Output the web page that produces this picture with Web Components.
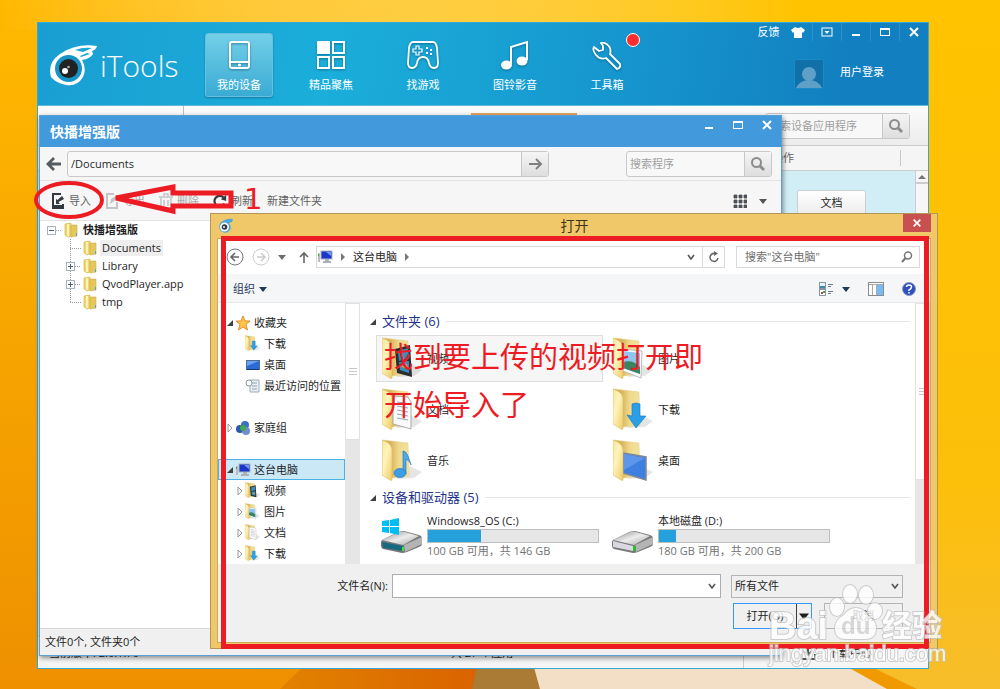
<!DOCTYPE html>
<html lang="zh-CN">
<head>
<meta charset="utf-8">
<title>iTools</title>
<style>
  html, body {
    height: 100%;
    margin: 0;
  }

  body {
    color: rgb( 30, 30, 30 );
    font-family: 'Open Sans', 'Noto Sans CJK SC', sans-serif;
    font-size: 11px;
    line-height: 16px;
    overflow: hidden;
  }
</style>
</head>
<body>
<desk-top>
  <itools-window></itools-window>
  <file-browser></file-browser>
  <open-dialog></open-dialog>
  <marker-layer></marker-layer>
  <water-mark></water-mark>
</desk-top>

<script>
// Shared folder body, used by all of the folder icons
const FOLDER = `
  <defs>
    <linearGradient id="back" x1="0" y1="0" x2="1" y2="0"><stop offset=".3" stop-color="#d9b45a"/><stop offset=".6" stop-color="#efd98c"/><stop offset="1" stop-color="#f3e19e"/></linearGradient>
    <linearGradient id="front" x1="0" y1="0" x2="1" y2="1"><stop offset="0" stop-color="#f7e597"/><stop offset=".4" stop-color="#fff3bd"/><stop offset="1" stop-color="#efcb62"/></linearGradient>
  </defs>
  <path d="M14 40l18-1 8-6-12-6z" fill="#000" opacity=".1"/>
  <path d="M1 1l25 3 1 33-17 2z" fill="url(#back)" stroke="#e3cd84" stroke-width=".5"/>`;
const FLAP = '<path d="M0 1q9 3 10 9v31q-1 1-2 0L0 36z" fill="url(#front)" stroke="#d9bd6c" stroke-width=".6"/>';
const DOWN = '<path d="M19 16q4-2 8 0v12h6L23 40 14 27l5 1z" fill="#2a9fe8" stroke="#1673bd" stroke-width=".6"/>';
const DISK = `
  <defs><linearGradient id="top" x1="0" y1="0" x2="1" y2="1"><stop offset="0" stop-color="#8f8f8f"/><stop offset=".5" stop-color="#ececec"/><stop offset="1" stop-color="#a7a7a7"/></linearGradient></defs>
  <path d="M1 27Q1 25 4 24L18 17q3-1 6-1l15 4q3 1 3 3v6q0 2-3 3L27 37q-3 1-5 1L3 34q-2-1-2-3z" fill="#777"/>
  <path d="M2 25l17-8q3-1 6 0l14 4-16 9z" fill="url(#top)"/>
  <path d="M24 30l18-8v7L25 37z" fill="#b4b4b4"/>`;

const ICONS = {
  phone: [ '0 0 32 32', '<g fill="none" stroke="#fff" stroke-width="2"><rect x="7" y="3" width="19" height="26" rx="2"/><path d="M7 23h19"/></g><circle cx="16.500" cy="26" r="1.600" fill="#fff"/>' ],
  squares: [ '0 0 32 32', '<g fill="none" stroke="#fff" stroke-width="2"><rect x="3" y="3" width="11" height="11" fill="#fff"/><rect x="18" y="3" width="11" height="11"/><rect x="3" y="18" width="11" height="11"/><rect x="18" y="18" width="11" height="11"/></g>' ],
  gamepad: [ '0 0 32 32', '<path d="M6 3h20q3 0 4 6l1 15q0 5-4 5t-5-5q-1-6-6-6t-6 6q-1 5-5 5t-4-5L2 9q1-6 4-6z" fill="none" stroke="#fff" stroke-width="1.800"/><path d="M9 7h3v3h3v3h-3v3H9v-3H6v-3h3z" fill="none" stroke="#fff" stroke-width="1.200"/><path d="M19 8h2v2h-2zM23 10h2v2h-2zM19 13h2v2h-2zM23 14h2v2h-2z" fill="#fff"/>' ],
  music: [ '0 0 32 32', '<path d="M12 25V8l16-5v18" fill="none" stroke="#fff" stroke-width="2"/><ellipse cx="7.500" cy="26" rx="5.500" ry="4.500" fill="#fff"/><ellipse cx="23" cy="22" rx="5.500" ry="4.500" fill="#fff"/>' ],
  wrench: [ '0 0 32 32', '<path d="M10 4q6-1 9 5 1 3 0 6l10 10q1 4-3 5L15 19Q9 21 5 16 1 11 3 8l5 4 4-1 0-4z" fill="none" stroke="#fff" stroke-width="1.800" stroke-linejoin="round"/>' ],
  logo: [ '0 0 48 46', '<path d="M11 11Q27 0 48 3q-1 4-5 5l1 3q-3 5-11 6Q38 26 34 34 28 44 17 42 7 40 2 34-2 20 11 11z" fill="#fff"/><path d="M26 7q8-3 17-2l-9 4zM32 14l9-3-3-1-7 3z" fill="#1ba7d6"/><circle cx="19.500" cy="25.500" r="13.500" fill="#1794c6"/><circle cx="19.500" cy="25.500" r="9.500" fill="#222"/><circle cx="16" cy="28" r="3" fill="#fff"/><circle cx="19.500" cy="24" r="1.300" fill="#aaa"/>' ],
  eye: [ '0 0 16 16', '<path d="M3 4Q9 0 15 1l-1 3-3 1q4 6-1 9-5 2-8-2-2-5 1-8z" fill="#4aa8de"/><circle cx="6.500" cy="9" r="4.500" fill="#fff"/><circle cx="6.500" cy="9" r="2.800" fill="#2b3a45"/><circle cx="6" cy="9" r="1" fill="#fff"/>' ],
  shirt: [ '0 0 14 12', '<path d="M4 1q3 2 6 0l4 3-2 3-1-1v6H3V6L2 7 0 4z" fill="#fff"/>' ],
  menu: [ '0 0 12 12', '<rect x="1" y="2" width="10" height="8" fill="none" stroke="#fff"/><path d="M3.500 5h5L6 8z" fill="#fff"/>' ],
  min: [ '0 0 12 12', '<path d="M2 8h8v2H2z" fill="#fff"/>' ],
  max: [ '0 0 12 12', '<path d="M1 2h10v8H1zM2 4v5h8V4z" fill="#fff" fill-rule="evenodd"/>' ],
  close: [ '0 0 12 12', '<path d="M2 2l8 8M10 2l-8 8" stroke="#fff" stroke-width="2"/>' ],
  avatar: [ '0 0 30 30', '<rect x=".5" y=".5" width="29" height="29" rx="2" fill="#1170a8" stroke="#1a8bc9"/><circle cx="15" cy="15" r="7" fill="#5fa0c8"/><path d="M2 29q4-8 13-8t13 8z" fill="#5fa0c8"/>' ],
  search: [ '0 0 16 16', '<circle cx="6.500" cy="6.500" r="4.500" fill="none" stroke="#8b8b8b" stroke-width="2"/><path d="M10 10l4 4" stroke="#8b8b8b" stroke-width="3"/>' ],
  back: [ '0 0 16 16', '<path d="M8 2L2 8l6 6M2 8h13" fill="none" stroke="#555b61" stroke-width="2.800"/>' ],
  go: [ '0 0 16 16', '<path d="M9 3l5 5-5 5M14 8H2" fill="none" stroke="#808080" stroke-width="2"/>' ],
  import: [ '0 0 14 16', '<path d="M10 1H2v14h10v-4" fill="none" stroke="#33393f" stroke-width="2"/><path d="M2 12h9v3H2z" fill="#33393f"/><path d="M5 6v5h4L7.500 9 13 6 11 3 6.500 7z" fill="#33393f"/>' ],
  export: [ '0 0 14 16', '<path d="M9 1H2v14h10V9" fill="none" stroke="#c4c4c4" stroke-width="2"/><path d="M5 11l1-5 6-4v4z" fill="#c4c4c4"/>' ],
  trash: [ '0 0 14 16', '<path d="M0 4h14M5 3V1h4v2M2 5v10h10V5M5 7v6M9 7v6" fill="none" stroke="#c4c4c4" stroke-width="1.500"/>' ],
  refresh: [ '0 0 16 16', '<path d="M13 11A6 6 0 1 1 12 4" fill="none" stroke="#33393f" stroke-width="2.500"/><path d="M9 6l6-5v7z" fill="#33393f"/>' ],
  grid: [ '0 0 14 14', '<path d="M1 1h3v3H1zM6 1h3v3H6zM11 1h3v3h-3zM1 6h3v3H1zM6 6h3v3H6zM11 6h3v3h-3zM1 11h3v3H1zM6 11h3v3H6zM11 11h3v3h-3z" fill="#4b5157" stroke="#4b5157" stroke-width=".8"/>' ],
  caret: [ '0 0 8 8', '<path d="M0 2h8L4 7z" fill="currentColor"/>' ],
  caretUp: [ '0 0 8 8', '<path d="M0 6h8L4 2z" fill="#777"/>' ],
  chevron: [ '0 0 10 10', '<path d="M2 3l3 4 3-4" fill="none" stroke="#555" stroke-width="1.600"/>' ],
  right: [ '0 0 8 8', '<path d="M2 0l4 4-4 4z" fill="#777"/>' ],
  open: [ '0 0 8 8', '<path d="M7 1v6H1z" fill="#404040"/>' ],
  closed: [ '0 0 8 10', '<path d="M2 1l4 4-4 4z" fill="#fff" stroke="#999"/>' ],
  circleBack: [ '0 0 18 18', '<circle cx="9" cy="9" r="8" fill="#fff" stroke="#777"/><path d="M9 5L5 9l4 4M5 9h8" fill="none" stroke="#666" stroke-width="1.600"/>' ],
  circleForward: [ '0 0 18 18', '<circle cx="9" cy="9" r="8" fill="#fff" stroke="#ccc"/><path d="M9 5l4 4-4 4M13 9H5" fill="none" stroke="#ccc" stroke-width="1.600"/>' ],
  up: [ '0 0 12 12', '<path d="M2 6l4-4 4 4M6 2v10" fill="none" stroke="#666" stroke-width="1.600"/>' ],
  reload: [ '0 0 12 12', '<path d="M10 7A4 4 0 1 1 7 2.500" fill="none" stroke="#666" stroke-width="1.500"/><path d="M6 0l4 2.500L6 5z" fill="#666"/>' ],
  lens: [ '0 0 12 12', '<circle cx="7" cy="4.500" r="3.500" fill="none" stroke="#777" stroke-width="1.500"/><path d="M4.500 7L1 11" stroke="#777" stroke-width="2"/>' ],
  view: [ '0 0 16 16', '<rect x="1.500" y="1.500" width="6" height="6" fill="#e7f3f8" stroke="#8796a3"/><rect x="1.500" y="8.500" width="6" height="6" fill="#fff" stroke="#8796a3"/><path d="M2 5h5v2H2z" fill="#408aa8"/><path d="M3 11h2v2H3z" fill="#bb4b39"/><path d="M5 10h2v2H5z" fill="#4caa4e"/><path d="M10 3.500h5M10 5.500h3M10 10.500h5M10 12.500h3" stroke="#6d7987"/>' ],
  pane: [ '0 0 16 16', '<rect x=".5" y="1.500" width="15" height="13" fill="#fff" stroke="#8a8a8a"/><path d="M1 3.500h14M4.500 4v10M8.500 4v10" stroke="#aaa"/><path d="M9 4h6v10H9z" fill="#77baf4"/>' ],
  help: [ '0 0 14 14', '<circle cx="7" cy="7" r="6.500" fill="#2d50be" stroke="#8c97bd"/><path d="M4.500 5q0-2 2.500-2t2.500 2-2.500 3v1M7 10v1.500" fill="none" stroke="#fff" stroke-width="1.500"/>' ],
  star: [ '0 0 16 16', '<path d="M8 1l2 5h5l-4 3.500L12.500 15 8 12l-4.500 3L5 9.500 1 6h5z" fill="#ffc24a" stroke="#ec8c2b"/>' ],
  pc: [ '0 0 16 16', '<path d="M1 4h2v9H1z" fill="#bbb"/><path d="M1 5h1v2H1z" fill="#3fae48"/><rect x="4" y="2" width="11" height="8" fill="#1c36c8" stroke="#a9b3c4"/><path d="M9 3h5v4z" fill="#6d9bf2"/><path d="M8 10h4v2h2v2H6v-2h2z" fill="#aab0b7"/>' ],
  group: [ '0 0 16 16', '<circle cx="10" cy="5" r="4" fill="#3d6dc4"/><circle cx="5" cy="9" r="4" fill="#2d58ad"/><circle cx="11" cy="11" r="4" fill="#6e8fca"/><circle cx="8" cy="8" r="3" fill="#43a852"/>' ],
  screen: [ '0 0 16 16', '<rect x="1.500" y="3.500" width="13" height="9" fill="#2b6bd8" stroke="#526b93"/><path d="M2 4h12L2 9z" fill="#69a4f0"/><path d="M2 12h12v1H2z" fill="#18345f"/>' ],
  recent: [ '0 0 16 16', '<path d="M5 2h9v12H5z" fill="#e9eff4" stroke="#9caab6"/><path d="M7 5h5M7 8h5M7 11h5" stroke="#88a1b5"/><circle cx="4" cy="5" r="3" fill="#fff" stroke="#8d9aa5"/>' ],
  tree: [ '0 0 16 16', '<path d="M2 2l6-1v13l-3 1-3-2z" fill="#efd66f" stroke="#cdb04e" stroke-width=".6"/><path d="M8 3l6 0v11l-6 1z" fill="#e5c75c" stroke="#cdb04e" stroke-width=".6"/><path d="M5 2v12" stroke="#fff3b4" stroke-width="2"/><path d="M13 11h1v3h-1z" fill="#55a4d2"/>' ],
  video: [ '0 0 42 44', FOLDER + '<path d="M13 12l15-4 2 32-15-4z" fill="#2a2e30"/><path d="M16 14l10-3 1 10-10 3zM17 25l10-1v12l-9-3z" fill="#378fbe"/><path d="M19 30l6-3 1 5z" fill="#d3a545"/>' + FLAP ],
  picture: [ '0 0 42 44', FOLDER + '<path d="M9 12l20 2-1 27-18-7z" fill="#fff" stroke="#bbb"/><path d="M10 14l17 2v21l-17-6z" fill="#8cc6ef"/><path d="M10 25q10-3 17 5v7l-17-6z" fill="#3c8362"/>' + FLAP ],
  doc: [ '0 0 42 44', FOLDER + '<path d="M11 8l15 1 3 5v27l-18-5z" fill="#fafafa" stroke="#aaa"/><path d="M15 14l9 1M15 18l11 2M15 22l11 2M15 26l11 2M15 30l11 2" stroke="#91a6ba"/>' + FLAP ],
  download: [ '0 0 42 44', FOLDER + FLAP + DOWN ],
  sound: [ '0 0 42 44', FOLDER + FLAP + '<path d="M21 33V12q3 0 5 5t3 9q-1-4-5-6v15z" fill="#4baaf0" stroke="#1f70b5" stroke-width=".6"/><ellipse cx="18" cy="34" rx="6" ry="4.500" fill="#3d9de8" stroke="#1f70b5" stroke-width=".6"/>' ],
  desktop: [ '0 0 42 44', FOLDER + '<path d="M10 14l23 4v23l-23-7z" fill="#3f7fe2" stroke="#7d8894" stroke-width="1.500"/><path d="M11 15l21 4-21 12z" fill="#6fa6f4" opacity=".6"/>' + FLAP ],
  system: [ '0 0 44 42', DISK + '<path d="M2 27l21 4v5L3 33z" fill="#16697e"/><path d="M22 32h2v4h-2z" fill="#3fe03f"/><path d="M2 6l7-1v6H2zM10 5l9-2v8h-9zM2 12h7v6l-7-1zM10 12h9v8l-9-2z" fill="#00bdf2"/>' ],
  disk: [ '0 0 44 42', DISK + '<path d="M2 26l20 5v5L2 32z" fill="#d9d9e2"/><path d="M22 31h3v5h-3z" fill="#2fb92f"/>' ],
  fetch: [ '0 0 16 16', '<path d="M8 1v9M4 6l4 4 4-4M1 9v5h14V9" fill="none" stroke="#555" stroke-width="2"/>' ],
  twigRoot: [ '0 0 16 18', '<path d="M9 9.500h6" stroke="#aaa" stroke-dasharray="1 1"/><rect x=".5" y="5.500" width="8" height="8" fill="#fff" stroke="#a8b3c1"/><path d="M2 9.500h5" stroke="#48617f"/>' ],
  twig: [ '0 0 16 18', '<path d="M4.500 0v18M4 9.500h11" stroke="#999" stroke-dasharray="1 1"/>' ],
  twigPlus: [ '0 0 16 18', '<path d="M4.500 0v18M9 9.500h6" stroke="#999" stroke-dasharray="1 1"/><rect x=".5" y="5.500" width="8" height="8" fill="#fff" stroke="#a8b3c1"/><path d="M2 9.500h5M4.500 7v5" stroke="#48617f"/>' ],
  twigEnd: [ '0 0 16 18', '<path d="M4.500 0v10M4 9.500h11" fill="none" stroke="#999" stroke-dasharray="1 1"/>' ]
};

// Renders into an open shadow root when first connected
class BaseElement extends HTMLElement {
  connectedCallback() {
    if( this.shadowRoot ) {
      return;
    }

    const template = document.createElement( 'template' );
    template.innerHTML = `
      <style>
        * { box-sizing: border-box; }
        :host { box-sizing: border-box; display: block; }
        button, input, select {
          background: none;
          border: none;
          border-radius: 0;
          color: inherit;
          font: inherit;
          margin: 0;
          min-width: 0;
          outline: none;
          padding: 0;
        }
        button {
          align-items: center;
          display: flex;
          justify-content: center;
          white-space: nowrap;
        }
      </style>
      ${this.render()}
    `;

    const shadowRoot = this.attachShadow( {mode: 'open'} );
    shadowRoot.appendChild( template.content.cloneNode( true ) );
  }

  attr( name ) {
    return this.getAttribute( name ) || '';
  }
}

class Icon extends BaseElement {
  render() {
    const [ box, body ] = ICONS[this.attr( 'name' )];
    const [ , , width, height ] = box.split( ' ' );
    const size = this.attr( 'size' ) || width;

    return `
      <style>
        :host { flex: none; line-height: 0; }
      </style>
      <svg viewBox="${box}" width="${size}" height="${Math.round( size * height / width )}" aria-hidden="true">${body}</svg>
    `;
  }
}

class Desktop extends BaseElement {
  render() {
    return `
      <style>
        :host {
          height: 100%;
          position: relative;
        }

        .wallpaper {
          display: block;
          height: 100%;
          width: 100%;
        }
      </style>
      <svg class="wallpaper" viewBox="0 0 1000 689" preserveAspectRatio="none" aria-hidden="true">
        <defs>
          <linearGradient id="left" x1="0" y1="0" x2="0" y2="1"><stop offset="0" stop-color="#ffb900"/><stop offset="1" stop-color="#ee9000"/></linearGradient>
          <linearGradient id="right" x1="0" y1="0" x2="0" y2="1"><stop offset="0" stop-color="#ffc300"/><stop offset=".7" stop-color="#fcbf0a"/><stop offset="1" stop-color="#f7bd2b"/></linearGradient>
          <linearGradient id="fade" x1="0" y1="0" x2="1" y2="0"><stop offset="0" stop-color="#fff" stop-opacity="0"/><stop offset="1" stop-color="#ffc300"/></linearGradient>
          <linearGradient id="fold" x1="0" y1="0" x2="1" y2="0"><stop offset="0" stop-color="#e28200"/><stop offset="1" stop-color="#d96200"/></linearGradient>
        </defs>
        <path d="M0 0h1000v689H0z" fill="url(#left)"/>
        <path d="M0 0h800v30H0z" fill="url(#fade)"/>
        <path d="M800 0h200v689H800z" fill="url(#right)"/>
        <path d="M310 660h170l-6 29H280z" fill="url(#fold)"/>
        <path d="M478 660h54l8 29h-68z" fill="#aa7b34"/>
        <path d="M532 660h310l58 29H540z" fill="#f3dfc5"/>
        <path d="M835 660h22l60 29h-30z" fill="#f09a00"/>
      </svg>
      <slot></slot>
    `;
  }
}

class NavTab extends BaseElement {
  render() {
    return `
      <style>
        button {
          border: 1px solid transparent;
          border-radius: 3px;
          color: white;
          flex-direction: column;
          gap: 6px;
          height: 64px;
          padding-top: 2px;
          position: relative;
          width: 68px;
        }

        :host( [active] ) button {
          background: linear-gradient( rgb( 115, 207, 232 ), rgb( 58, 171, 212 ) );
          border-color: rgb( 103, 190, 221 );
          box-shadow: 0 1px 2px rgba( 0, 60, 90, 0.4 );
        }

        ui-icon {
          filter: drop-shadow( 0 1px 1px rgba( 0, 60, 90, 0.5 ) );
        }

        .dot {
          background: rgb( 255, 45, 45 );
          border: 1px solid white;
          border-radius: 50%;
          height: 14px;
          position: absolute;
          right: 0;
          top: -1px;
          width: 14px;
        }
      </style>
      <button type="button">
        <ui-icon name="${this.attr( 'icon' )}"></ui-icon>
        <slot></slot>
        ${this.hasAttribute( 'alert' ) ? '<span class="dot"></span>' : ''}
      </button>
    `;
  }
}

class SearchBox extends BaseElement {
  render() {
    return `
      <style>
        :host {
          background: rgb( 248, 248, 248 );
          border: 1px solid rgb( 200, 200, 200 );
          border-radius: 3px;
          display: flex;
          height: 26px;
        }

        input {
          color: rgb( 40, 40, 40 );
          flex: 1;
          padding: 0 3px;
        }

        input::placeholder {
          color: rgb( 160, 160, 160 );
        }

        button {
          background: linear-gradient( rgb( 245, 245, 245 ), rgb( 222, 222, 222 ) );
          border-left: 1px solid rgb( 200, 200, 200 );
          width: 27px;
        }
      </style>
      <input type="text" aria-label="${this.attr( 'label' )}" placeholder="${this.attr( 'placeholder' )}" value="${this.attr( 'value' )}">
      <button type="button" aria-label="${this.attr( 'label' )}"><ui-icon name="${this.attr( 'icon' ) || 'search'}"></ui-icon></button>
    `;
  }
}

class ItoolsWindow extends BaseElement {
  render() {
    return `
      <style>
        :host {
          background: rgb( 245, 245, 245 );
          border: 1px solid rgb( 52, 168, 214 );
          bottom: 20px;
          display: flex;
          flex-direction: column;
          left: 37px;
          position: absolute;
          right: 71px;
          top: 22px;
        }

        header {
          background: linear-gradient( 100deg, rgb( 26, 158, 210 ), rgb( 27, 174, 218 ) 33%, rgb( 22, 150, 206 ) 65%, rgb( 18, 128, 192 ) 90% );
          border-bottom: 1px solid rgb( 98, 186, 220 );
          color: white;
          display: flex;
          height: 83px;
        }

        .brand {
          align-items: center;
          display: flex;
          font-size: 30px;
          font-weight: 300;
          gap: 3px;
          line-height: 40px;
          padding: 4px 0 0 11px;
          width: 167px;
        }

        nav {
          display: flex;
          flex: 1;
          gap: 24px;
          padding-top: 10px;
        }

        .account {
          align-items: flex-end;
          display: flex;
          flex-direction: column;
          gap: 18px;
        }

        .controls {
          align-items: center;
          display: flex;
          height: 18px;
        }

        .controls button {
          border-left: 1px solid rgba( 255, 255, 255, 0.12 );
          height: 18px;
          width: 29px;
        }

        .controls button.plain {
          border: none;
        }

        .user {
          align-items: flex-start;
          display: flex;
          gap: 16px;
          padding-right: 44px;
        }

        .user button {
          height: 26px;
        }

        .bar {
          align-items: center;
          background: linear-gradient( rgb( 251, 251, 251 ), rgb( 236, 236, 236 ) );
          border-bottom: 1px solid rgb( 204, 204, 204 );
          display: flex;
          height: 40px;
          padding-right: 18px;
        }

        .side {
          border-right: 1px solid rgb( 190, 190, 190 );
          height: 100%;
          width: 146px;
        }

        .tab {
          align-self: flex-end;
          border-top: 2px solid rgb( 224, 164, 96 );
          height: 32px;
          margin-left: 287px;
          width: 106px;
        }

        search-box {
          margin-left: auto;
          width: 145px;
        }

        .columns {
          align-items: center;
          border-bottom: 1px solid rgb( 204, 204, 204 );
          color: rgb( 100, 100, 100 );
          display: flex;
          height: 25px;
          justify-content: flex-end;
          padding-right: 27px;
        }

        .columns span {
          border-right: 1px solid rgb( 200, 200, 200 );
          width: 129px;
        }

        .list {
          background: rgb( 209, 238, 246 );
          display: flex;
          flex: 1;
          justify-content: flex-end;
        }

        .list > button {
          background: linear-gradient( white, rgb( 236, 236, 236 ) );
          border: 1px solid rgb( 200, 208, 212 );
          border-radius: 2px;
          height: 25px;
          margin: 19px 49px 0 0;
          width: 69px;
        }

        .scroll {
          background: rgb( 246, 246, 246 );
          border-left: 1px solid rgb( 205, 205, 205 );
          width: 13px;
        }

        .scroll button {
          border-bottom: 2px solid rgb( 205, 205, 205 );
          height: 13px;
          width: 100%;
        }

        footer {
          align-items: center;
          border-top: 1px solid rgb( 204, 204, 204 );
          display: flex;
          height: 32px;
          padding-left: 11px;
        }

        footer .version {
          width: 402px;
        }

        footer .download {
          align-items: center;
          border-left: 1px solid rgb( 204, 204, 204 );
          display: flex;
          gap: 12px;
          height: 100%;
          justify-content: center;
          margin-left: auto;
          width: 185px;
        }
      </style>
      <header>
        <div class="brand"><ui-icon name="logo"></ui-icon>iTools</div>
        <nav>
          <nav-tab icon="phone" active>我的设备</nav-tab>
          <nav-tab icon="squares">精品聚焦</nav-tab>
          <nav-tab icon="gamepad">找游戏</nav-tab>
          <nav-tab icon="music">图铃影音</nav-tab>
          <nav-tab icon="wrench" alert>工具箱</nav-tab>
        </nav>
        <div class="account">
          <div class="controls">
            <button class="plain" type="button">反馈</button>
            <button class="plain" type="button" aria-label="皮肤"><ui-icon name="shirt"></ui-icon></button>
            <button type="button" aria-label="菜单"><ui-icon name="menu"></ui-icon></button>
            <button type="button" aria-label="最小化"><ui-icon name="min"></ui-icon></button>
            <button type="button" aria-label="最大化"><ui-icon name="max"></ui-icon></button>
            <button type="button" aria-label="关闭"><ui-icon name="close"></ui-icon></button>
          </div>
          <div class="user">
            <ui-icon name="avatar"></ui-icon>
            <button type="button">用户登录</button>
          </div>
        </div>
      </header>
      <div class="bar">
        <div class="side"></div>
        <div class="tab"></div>
        <search-box label="搜索设备应用程序" placeholder="搜索设备应用程序"></search-box>
      </div>
      <div class="columns"><span>操作</span></div>
      <div class="list">
        <button type="button">文档</button>
        <div class="scroll"><button type="button" aria-label="向上"><ui-icon name="caretUp"></ui-icon></button></div>
      </div>
      <footer>
        <span class="version">当前版本: 2.0.1.70</span>
        <span>共 27 个应用</span>
        <div class="download"><ui-icon name="fetch"></ui-icon>下载中心</div>
      </footer>
    `;
  }
}

class ToolButton extends BaseElement {
  render() {
    return `
      <style>
        button {
          color: rgb( 96, 96, 96 );
          gap: 4px;
        }

        button:disabled {
          color: rgb( 170, 170, 170 );
        }
      </style>
      <button type="button" ${this.hasAttribute( 'disabled' ) ? 'disabled' : ''}>
        ${this.attr( 'icon' ) ? `<ui-icon name="${this.attr( 'icon' )}" size="14"></ui-icon>` : ''}
        <slot></slot>
      </button>
    `;
  }
}

class TreeRow extends BaseElement {
  render() {
    return `
      <style>
        :host {
          align-items: center;
          display: flex;
          gap: 2px;
          height: 18px;
        }

        :host( [child] ) { padding-left: 19px; }
        :host( [root] ) { font-weight: bold; }

        span { padding: 0 2px; }
        :host( [selected] ) span { background: rgb( 238, 238, 238 ); }

        .mark {
          align-items: center;
          display: flex;
        }
      </style>
      <div class="mark"><ui-icon name="${this.attr( 'twig' )}"></ui-icon><ui-icon name="tree"></ui-icon></div>
      <span><slot></slot></span>
    `;
  }
}

class FileBrowser extends BaseElement {
  render() {
    return `
      <style>
        :host {
          background: rgb( 246, 246, 246 );
          border: 1px solid rgb( 88, 160, 214 );
          bottom: 33px;
          box-shadow: 1px 2px 5px rgba( 0, 0, 0, 0.45 );
          display: flex;
          flex-direction: column;
          left: 39px;
          position: absolute;
          right: 218px;
          top: 115px;
        }

        header {
          align-items: center;
          background: rgb( 66, 153, 220 );
          color: white;
          display: flex;
          height: 31px;
          padding-left: 10px;
        }

        h1 {
          flex: 1;
          font-size: 14px;
          line-height: 18px;
          margin: 0;
        }

        header button {
          align-self: flex-start;
          height: 18px;
          width: 29px;
        }

        .address {
          align-items: center;
          border-bottom: 1px solid rgb( 226, 226, 226 );
          display: flex;
          height: 34px;
          padding: 0 9px 0 6px;
        }

        .address > button {
          width: 21px;
          justify-content: flex-start;
        }

        .path { flex: 1; }

        .find {
          margin-left: 77px;
          width: 146px;
        }

        .tools {
          align-items: center;
          border-bottom: 1px solid rgb( 226, 226, 226 );
          display: flex;
          gap: 14px;
          height: 40px;
          padding: 0 14px 0 11px;
        }

        .tools div {
          align-items: center;
          color: rgb( 85, 85, 85 );
          display: flex;
          gap: 12px;
          margin-left: auto;
        }

        main {
          background: white;
          flex: 1;
          padding: 0 7px;
        }

        footer {
          background: rgb( 240, 240, 240 );
          border-top: 1px solid rgb( 215, 215, 215 );
          line-height: 26px;
          padding-left: 5px;
        }
      </style>
      <header>
        <h1>快播增强版</h1>
        <button type="button" aria-label="最小化"><ui-icon name="min"></ui-icon></button>
        <button type="button" aria-label="最大化"><ui-icon name="max"></ui-icon></button>
        <button type="button" aria-label="关闭"><ui-icon name="close"></ui-icon></button>
      </header>
      <div class="address">
        <button type="button" aria-label="返回"><ui-icon name="back"></ui-icon></button>
        <search-box class="path" icon="go" label="路径" value="/Documents"></search-box>
        <search-box class="find" label="搜索程序" placeholder="搜索程序"></search-box>
      </div>
      <div class="tools">
        <tool-button icon="import">导入</tool-button>
        <tool-button icon="export" disabled>导出</tool-button>
        <tool-button icon="trash" disabled>删除</tool-button>
        <tool-button icon="refresh">刷新</tool-button>
        <tool-button>新建文件夹</tool-button>
        <div><ui-icon name="grid"></ui-icon><ui-icon name="caret"></ui-icon></div>
      </div>
      <main>
        <tree-row root twig="twigRoot">快播增强版</tree-row>
        <tree-row child selected twig="twig">Documents</tree-row>
        <tree-row child twig="twigPlus">Library</tree-row>
        <tree-row child twig="twigPlus">QvodPlayer.app</tree-row>
        <tree-row child twig="twigEnd">tmp</tree-row>
      </main>
      <footer>文件0个, 文件夹0个</footer>
    `;
  }
}

class SideItem extends BaseElement {
  render() {
    return `
      <style>
        :host {
          align-items: center;
          border: 1px solid transparent;
          display: flex;
          height: 21px;
          padding-left: 7px;
          white-space: nowrap;
        }

        :host( [child] ) { padding-left: 17px; }

        :host( [selected] ) {
          background: rgb( 203, 232, 246 );
          border-color: rgb( 76, 178, 229 );
        }

        .arrow { width: 9px; }
        ui-icon { margin-right: 3px; }
        .arrow ui-icon { margin: 0; }
      </style>
      <div class="arrow">${this.attr( 'arrow' ) ? `<ui-icon name="${this.attr( 'arrow' )}"></ui-icon>` : ''}</div>
      <ui-icon name="${this.attr( 'icon' )}" size="16"></ui-icon>
      <slot></slot>
    `;
  }
}

class ScrollBar extends BaseElement {
  render() {
    return `
      <style>
        :host {
          background: rgb( 230, 230, 230 );
          flex: none;
          width: 15px;
        }

        div {
          align-items: center;
          background: white;
          border: 1px solid rgb( 226, 226, 226 );
          display: flex;
          height: var( --thumb );
          justify-content: center;
        }

        i {
          border: solid rgb( 200, 200, 200 );
          border-width: 1px 0;
          height: 7px;
          padding: 2px 0;
          width: 8px;
        }

        i::before {
          background: rgb( 200, 200, 200 );
          content: '';
          display: block;
          height: 1px;
        }
      </style>
      <div><i></i></div>
    `;
  }
}

class FolderTile extends BaseElement {
  render() {
    return `
      <style>
        :host {
          align-items: center;
          border: 1px solid transparent;
          display: flex;
          gap: 3px;
          height: 47px;
          padding-left: 5px;
        }

        :host( [selected] ) {
          background: rgb( 246, 246, 246 );
          border-color: rgb( 222, 222, 222 );
        }
      </style>
      <ui-icon name="${this.attr( 'icon' )}"></ui-icon>
      <slot></slot>
    `;
  }
}

class DriveTile extends BaseElement {
  render() {
    return `
      <style>
        :host {
          align-items: center;
          display: flex;
          gap: 3px;
          padding: 2px 4px 0;
        }

        .info {
          flex: 1;
          white-space: nowrap;
        }

        .bar {
          background: rgb( 230, 230, 230 );
          border: 1px solid rgb( 190, 190, 190 );
          height: 14px;
        }

        .bar div {
          background: rgb( 38, 160, 218 );
          height: 100%;
          width: ${this.attr( 'used' )}%;
        }

        .free { color: rgb( 115, 115, 115 ); }
      </style>
      <ui-icon name="${this.attr( 'icon' )}"></ui-icon>
      <div class="info">
        <slot></slot>
        <div class="bar"><div></div></div>
        <div class="free">${this.attr( 'free' )}</div>
      </div>
    `;
  }
}

class OpenDialog extends BaseElement {
  render() {
    return `
      <style>
        :host {
          background: rgb( 240, 200, 105 );
          border: 1px solid rgb( 178, 150, 85 );
          bottom: 40px;
          display: flex;
          flex-direction: column;
          left: 210px;
          padding: 0 6px 5px;
          position: absolute;
          right: 62px;
          top: 213px;
        }

        header {
          align-items: center;
          display: flex;
          height: 26px;
          padding-left: 1px;
        }

        h2 {
          color: rgb( 60, 50, 30 );
          flex: 1;
          font-size: 14px;
          font-weight: normal;
          line-height: 20px;
          margin: 0;
          padding-left: 12px;
          text-align: center;
        }

        header button {
          align-self: flex-start;
          background: rgb( 200, 80, 80 );
          height: 18px;
          width: 28px;
        }

        .body {
          background: white;
          border: 1px solid rgb( 205, 170, 90 );
          display: flex;
          flex: 1;
          flex-direction: column;
        }

        .nav {
          align-items: center;
          display: flex;
          height: 35px;
          padding: 1px 10px 0 8px;
        }

        .nav .caret {
          color: rgb( 110, 110, 110 );
          margin: 0 12px 0 8px;
        }

        .nav .round { margin-right: 8px; }
        .nav .up { margin-right: 6px; }

        .place {
          align-items: center;
          border: 1px solid rgb( 217, 217, 217 );
          display: flex;
          flex: 1;
          gap: 6px;
          height: 22px;
        }

        .place .down { margin-left: auto; }

        .place .reload {
          border-left: 1px solid rgb( 217, 217, 217 );
          height: 100%;
          width: 22px;
        }

        .query {
          align-items: center;
          border: 1px solid rgb( 217, 217, 217 );
          display: flex;
          height: 22px;
          margin-left: 11px;
          padding: 0 6px 0 8px;
          width: 184px;
        }

        .query input { flex: 1; }
        .query input::placeholder { color: rgb( 110, 110, 110 ); }

        .commands {
          align-items: center;
          background: rgb( 245, 246, 247 );
          border-bottom: 1px solid rgb( 232, 232, 232 );
          color: rgb( 30, 57, 91 );
          display: flex;
          height: 29px;
          padding: 1px 14px 0 15px;
        }

        .commands button { gap: 4px; }

        .commands div {
          align-items: center;
          display: flex;
          margin-left: auto;
        }

        .commands .view {
          gap: 8px;
          margin-right: 18px;
        }

        .commands .pane { margin-right: 18px; }

        .content {
          display: flex;
          flex: 1;
          min-height: 0;
          overflow: hidden;
        }

        aside {
          padding-top: 9px;
          width: 127px;
        }

        .space { height: 21px; }

        main {
          flex: 1;
          padding: 5px 5px 0 9px;
        }

        h3 {
          align-items: center;
          color: rgb( 30, 50, 135 );
          display: flex;
          font-size: 13px;
          font-weight: normal;
          gap: 5px;
          line-height: 27px;
          margin: 0;
        }

        h3::after {
          background: rgb( 230, 230, 230 );
          content: '';
          flex: 1;
          height: 1px;
          margin-left: 2px;
        }

        .tiles {
          display: grid;
          gap: 4px;
          grid-template-columns: repeat( auto-fill, 227px );
          padding-left: 7px;
        }

        .left { --thumb: 137px; }
        .right { --thumb: 177px; }

        footer {
          background: rgb( 240, 240, 240 );
          display: flex;
          flex-direction: column;
          gap: 5px;
          height: 78px;
          padding: 10px 27px 0 0;
        }

        .row {
          align-items: center;
          display: flex;
        }

        .row label {
          padding-right: 4px;
          text-align: right;
          width: 174px;
        }

        .name {
          background: white;
          border: 1px solid rgb( 171, 173, 179 );
          display: flex;
          flex: 1;
          height: 24px;
          margin-right: 10px;
        }

        .name input { flex: 1; }
        .name button { width: 16px; }

        .filter {
          align-items: center;
          border: 1px solid rgb( 180, 180, 180 );
          display: grid;
          height: 23px;
          width: 172px;
        }

        .filter select {
          appearance: none;
          grid-area: 1 / 1;
          height: 21px;
          padding-left: 3px;
        }

        .filter ui-icon {
          grid-area: 1 / 1;
          justify-self: end;
          margin-right: 2px;
          pointer-events: none;
        }

        .actions {
          gap: 12px;
          justify-content: flex-end;
        }

        .split {
          border: 1px solid rgb( 51, 153, 255 );
          display: flex;
          height: 26px;
          width: 79px;
        }

        .split button:first-child { flex: 1; }

        .split button:last-child {
          border-left: 1px solid rgb( 60, 60, 60 );
          width: 15px;
        }

        .cancel {
          border: 1px solid rgb( 180, 180, 180 );
          height: 26px;
          width: 79px;
        }
      </style>
      <header>
        <ui-icon name="eye"></ui-icon>
        <h2>打开</h2>
        <button type="button" aria-label="关闭"><ui-icon name="close" size="10"></ui-icon></button>
      </header>
      <div class="body">
        <div class="nav">
          <button class="round" type="button" aria-label="后退"><ui-icon name="circleBack"></ui-icon></button>
          <button type="button" aria-label="前进"><ui-icon name="circleForward"></ui-icon></button>
          <ui-icon class="caret" name="caret"></ui-icon>
          <button class="up" type="button" aria-label="向上"><ui-icon name="up"></ui-icon></button>
          <div class="place">
            <ui-icon name="pc"></ui-icon>
            <ui-icon name="right"></ui-icon>
            <span>这台电脑</span>
            <ui-icon name="right"></ui-icon>
            <button class="down" type="button" aria-label="历史"><ui-icon name="chevron"></ui-icon></button>
            <button class="reload" type="button" aria-label="刷新"><ui-icon name="reload"></ui-icon></button>
          </div>
          <div class="query">
            <input type="text" aria-label="搜索" placeholder="搜索&quot;这台电脑&quot;">
            <ui-icon name="lens"></ui-icon>
          </div>
        </div>
        <div class="commands">
          <button type="button">组织 <ui-icon name="caret"></ui-icon></button>
          <div>
            <button class="view" type="button" aria-label="视图"><ui-icon name="view"></ui-icon><ui-icon name="caret"></ui-icon></button>
            <button class="pane" type="button" aria-label="预览窗格"><ui-icon name="pane"></ui-icon></button>
            <button type="button" aria-label="帮助"><ui-icon name="help"></ui-icon></button>
          </div>
        </div>
        <div class="content">
          <aside>
            <side-item arrow="open" icon="star">收藏夹</side-item>
            <side-item child icon="download">下载</side-item>
            <side-item child icon="screen">桌面</side-item>
            <side-item child icon="recent">最近访问的位置</side-item>
            <div class="space"></div>
            <side-item arrow="closed" icon="group">家庭组</side-item>
            <div class="space"></div>
            <side-item selected arrow="open" icon="pc">这台电脑</side-item>
            <side-item child arrow="closed" icon="video">视频</side-item>
            <side-item child arrow="closed" icon="picture">图片</side-item>
            <side-item child arrow="closed" icon="doc">文档</side-item>
            <side-item child arrow="closed" icon="download">下载</side-item>
          </aside>
          <scroll-bar class="left"></scroll-bar>
          <main>
            <h3><ui-icon name="open"></ui-icon>文件夹 (6)</h3>
            <div class="tiles">
              <folder-tile selected icon="video">视频</folder-tile>
              <folder-tile icon="picture">图片</folder-tile>
              <folder-tile icon="doc">文档</folder-tile>
              <folder-tile icon="download">下载</folder-tile>
              <folder-tile icon="sound">音乐</folder-tile>
              <folder-tile icon="desktop">桌面</folder-tile>
            </div>
            <h3><ui-icon name="open"></ui-icon>设备和驱动器 (5)</h3>
            <div class="tiles">
              <drive-tile icon="system" used="31" free="100 GB 可用，共 146 GB">Windows8_OS (C:)</drive-tile>
              <drive-tile icon="disk" used="10" free="180 GB 可用，共 200 GB">本地磁盘 (D:)</drive-tile>
            </div>
          </main>
          <scroll-bar class="right"></scroll-bar>
        </div>
        <footer>
          <div class="row">
            <label for="name">文件名(N):</label>
            <div class="name">
              <input id="name" type="text">
              <button type="button" aria-label="历史"><ui-icon name="chevron"></ui-icon></button>
            </div>
            <div class="filter">
              <select aria-label="文件类型"><option>所有文件</option></select>
              <ui-icon name="chevron"></ui-icon>
            </div>
          </div>
          <div class="row actions">
            <div class="split">
              <button type="button">打开(O)</button>
              <button type="button" aria-label="打开方式"><ui-icon name="caret" size="10"></ui-icon></button>
            </div>
            <button class="cancel" type="button">取消</button>
          </div>
        </footer>
      </div>
    `;
  }
}

// Red pen marks drawn over the windows
class MarkerLayer extends BaseElement {
  render() {
    return `
      <style>
        :host {
          color: rgb( 237, 28, 36 );
          font-size: 29px;
          inset: 0;
          line-height: 48px;
          pointer-events: none;
          position: absolute;
        }

        svg {
          left: 30px;
          position: absolute;
          top: 175px;
        }

        .step {
          font-family: 'DejaVu Sans', sans-serif;
          left: 244px;
          position: absolute;
          top: 175px;
        }

        .frame {
          border: 5px solid;
          bottom: 40px;
          left: 221px;
          position: absolute;
          right: 71px;
          top: 236px;
        }

        p {
          left: 384px;
          margin: 0;
          position: absolute;
          top: 333px;
          white-space: nowrap;
        }
      </style>
      <svg width="210" height="50" fill="none" stroke="currentColor" stroke-width="4" aria-hidden="true">
        <ellipse cx="39" cy="25" rx="33" ry="17"/>
        <path d="M86 23l57-11v6h58v13h-58v5z" stroke-width="5"/>
      </svg>
      <span class="step">1</span>
      <div class="frame"></div>
      <p>找到要上传的视频打开即<br>开始导入了</p>
    `;
  }
}

class WaterMark extends BaseElement {
  render() {
    return `
      <style>
        :host {
          bottom: 19px;
          pointer-events: none;
          position: absolute;
          right: 48px;
        }

        svg {
          display: block;
          font-family: 'Liberation Sans', 'Noto Sans CJK SC', sans-serif;
          opacity: 0.8;
          paint-order: stroke;
        }
      </style>
      <svg width="186" height="90" fill="#fff" stroke="#c4c4c4" stroke-width="2">
        <ellipse cx="84" cy="14" rx="7" ry="9"/>
        <ellipse cx="100" cy="15" rx="7" ry="9"/>
        <ellipse cx="71" cy="27" rx="7" ry="9"/>
        <ellipse cx="109" cy="31" rx="7" ry="8"/>
        <path d="M90 28q7 0 11 7 9 5 9 13 0 11-11 11H79q-10 0-10-11 0-8 9-13 5-7 12-7z"/>
        <text x="3" y="59" font-size="38" font-weight="bold">Bai</text>
        <text x="75" y="54" font-size="24" font-weight="bold" fill="#d2d2d2" stroke="none">du</text>
        <text x="116" y="56" font-size="30" font-weight="bold">经验</text>
        <text x="3" y="81" font-size="22">jingyan.baidu.com</text>
      </svg>
    `;
  }
}

window.customElements.define( 'ui-icon', Icon );
window.customElements.define( 'nav-tab', NavTab );
window.customElements.define( 'search-box', SearchBox );
window.customElements.define( 'tool-button', ToolButton );
window.customElements.define( 'tree-row', TreeRow );
window.customElements.define( 'side-item', SideItem );
window.customElements.define( 'scroll-bar', ScrollBar );
window.customElements.define( 'folder-tile', FolderTile );
window.customElements.define( 'drive-tile', DriveTile );
window.customElements.define( 'itools-window', ItoolsWindow );
window.customElements.define( 'file-browser', FileBrowser );
window.customElements.define( 'open-dialog', OpenDialog );
window.customElements.define( 'marker-layer', MarkerLayer );
window.customElements.define( 'water-mark', WaterMark );
window.customElements.define( 'desk-top', Desktop );
</script>
</body>
</html>
